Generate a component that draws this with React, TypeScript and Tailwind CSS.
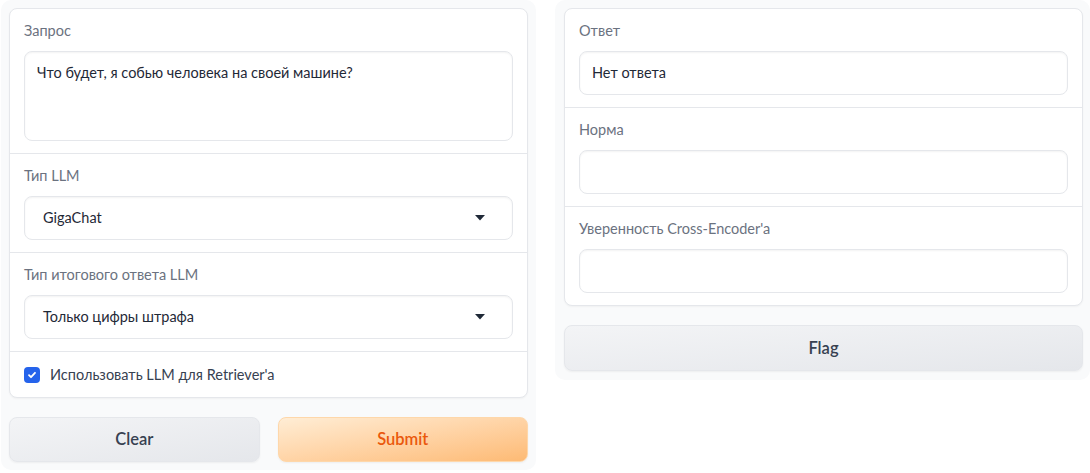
import React from 'react'

function Label({ children }: { children: React.ReactNode }) {
  return <div className="text-[14.5px] leading-5 text-[#6b7280] mb-[10px]">{children}</div>
}

function Field({ children, h = 'h-[44px]', px = 'px-3' }: { children?: React.ReactNode; h?: string; px?: string }) {
  return (
    <div className={`${h} ${px} w-full rounded-lg border border-[#e5e7eb] bg-white shadow-[inset_0_1px_2px_rgba(0,0,0,0.05)] text-[14.5px] text-[#1f2937] flex items-center`}>
      {children}
    </div>
  )
}

function Dropdown({ value }: { value: string }) {
  return (
    <Field px="pl-[18px] pr-[27px]">
      <span className="flex-1">{value}</span>
      <svg width="10" height="6" viewBox="0 0 10 6" className="text-[#1f2937]">
        <path d="M0 0h10L5 5.5z" fill="currentColor" />
      </svg>
    </Field>
  )
}

function Section({ children, last = false }: { children: React.ReactNode; last?: boolean }) {
  return <div className={`px-[14px] pt-3 pb-3 ${last ? '' : 'border-b border-[#e5e7eb]'}`}>{children}</div>
}

export default function App() {
  return (
    <div className="w-[1090px] h-[473px] bg-white flex items-start gap-[19px] pl-px" style={{ fontFamily: 'Lato, "Noto Sans", sans-serif' }}>
      {/* inputs */}
      <div className="w-[535px] h-[470px] bg-[#f9fafb] rounded-[10px] p-2 flex flex-col">
        <div className="bg-white border border-[#e5e7eb] rounded-lg shadow-[0_1px_2px_rgba(0,0,0,0.04)]">
          <Section>
            <Label>Запрос</Label>
            <div className="h-[90px] w-full rounded-lg border border-[#e5e7eb] bg-white shadow-[inset_0_1px_2px_rgba(0,0,0,0.05)] px-3 pt-[11px] text-[14.5px] leading-5 text-[#1f2937]">
              Что будет, я собью человека на своей машине?
            </div>
          </Section>
          <Section>
            <Label>Тип LLM</Label>
            <Dropdown value="GigaChat" />
          </Section>
          <Section>
            <Label>Тип итогового ответа LLM</Label>
            <Dropdown value="Только цифры штрафа" />
          </Section>
          <div className="px-[14px] h-[45px] flex items-center gap-[10px]">
            <span className="w-4 h-4 rounded-[4px] bg-[#2563eb] flex items-center justify-center">
              <svg width="10" height="10" viewBox="0 0 10 10">
                <path d="M2 5.2l2 2 4-4.4" stroke="white" strokeWidth="1.8" fill="none" strokeLinecap="round" strokeLinejoin="round" />
              </svg>
            </span>
            <span className="text-[14.5px] text-[#374151]">Использовать LLM для Retriever'a</span>
          </div>
        </div>
        <div className="flex gap-[18px] mt-[19px]">
          <button className="flex-1 h-[45px] rounded-lg border border-[#e5e7eb] bg-gradient-to-br from-[#f3f4f6] to-[#e5e7eb] text-[16.5px] font-semibold text-[#374151] shadow-[0_1px_2px_rgba(0,0,0,0.05)]">
            Clear
          </button>
          <button className="flex-1 h-[45px] rounded-lg border border-[#fed7aa] bg-gradient-to-br from-[#ffedd5] to-[#fdba74] text-[16.5px] font-semibold text-[#ea580c] shadow-[0_1px_2px_rgba(0,0,0,0.05)]">
            Submit
          </button>
        </div>
      </div>

      {/* outputs */}
      <div className="w-[535px] h-[380px] bg-[#f9fafb] rounded-[10px] pt-2 pl-[9px] pr-[7px] flex flex-col">
        <div className="bg-white border border-[#e5e7eb] rounded-lg shadow-[0_1px_2px_rgba(0,0,0,0.04)]">
          <Section>
            <Label>Ответ</Label>
            <Field>Нет ответа</Field>
          </Section>
          <Section>
            <Label>Норма</Label>
            <Field />
          </Section>
          <Section last>
            <Label>Уверенность Cross-Encoder'a</Label>
            <Field />
          </Section>
        </div>
        <button className="mt-[19px] h-[46px] w-full rounded-lg border border-[#e5e7eb] bg-gradient-to-br from-[#f3f4f6] to-[#e5e7eb] text-[16.5px] font-semibold text-[#374151] shadow-[0_1px_2px_rgba(0,0,0,0.05)]">
          Flag
        </button>
      </div>
    </div>
  )
}
